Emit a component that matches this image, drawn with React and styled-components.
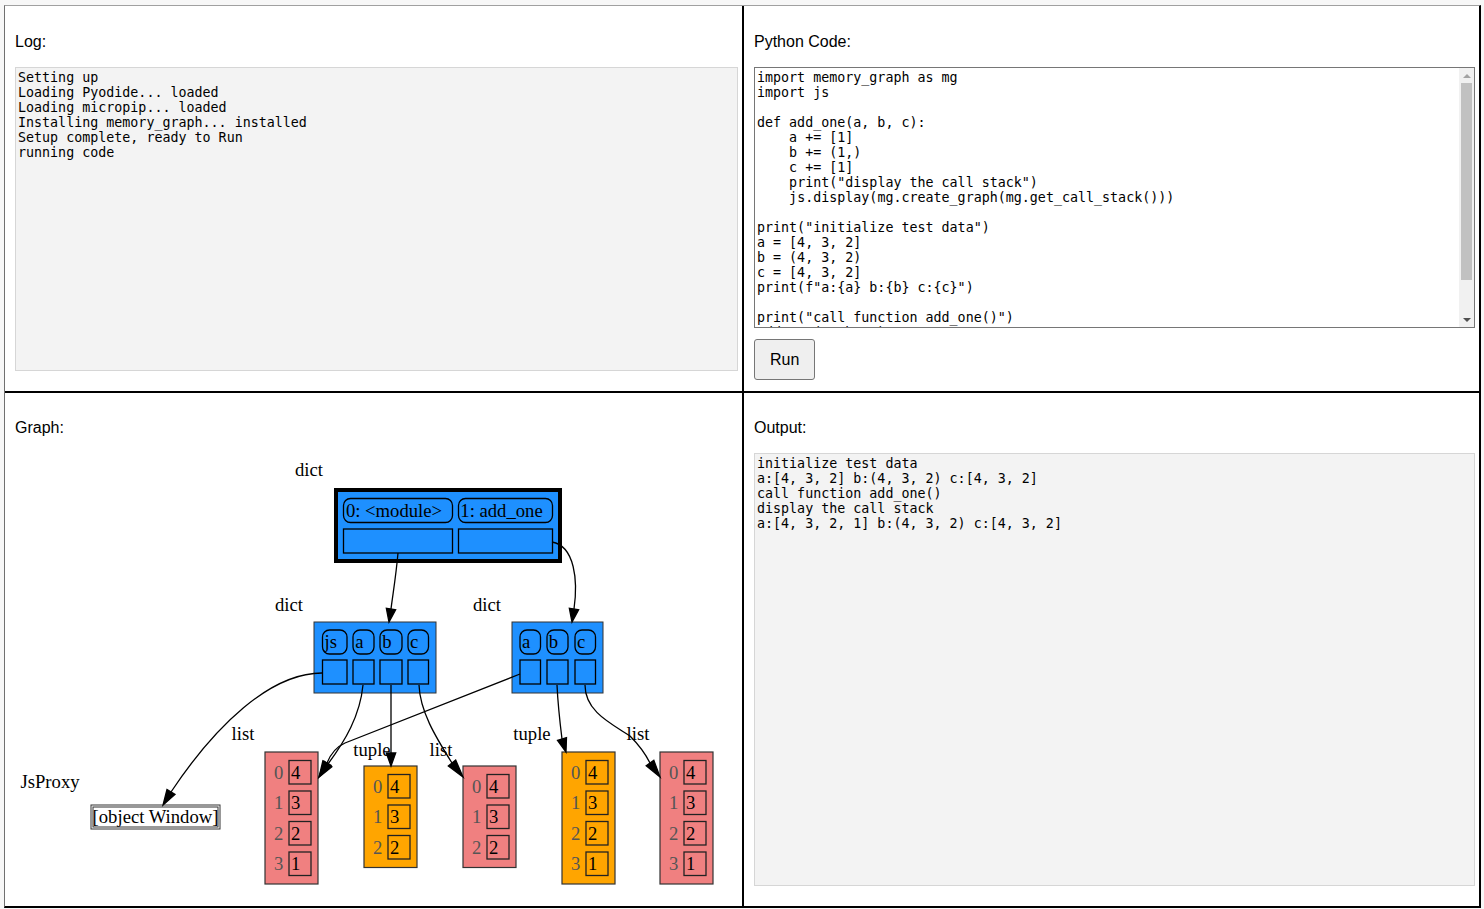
import styled, { createGlobalStyle } from "styled-components";

const GlobalStyle = createGlobalStyle`
  html, body {
    margin: 0;
    padding: 0;
    background: #f7f7f7;
  }
  body {
    font-family: "Liberation Sans", Arial, sans-serif;
  }
`;

const Board = styled.div`
  display: grid;
  grid-template-columns: 737px 1fr;
  grid-template-rows: 385px 1fr;
  gap: 2px;
  background: #000;
  margin: 5px 0 0 4px;
  width: 1474px;
  height: 900px;
  border-top: 1px solid #a0a0a0;
  border-left: 1px solid #707070;
  border-right: 2px solid #000;
  border-bottom: 2px solid #000;
`;

const Cell = styled.section`
  background: #fff;
  display: flex;
  flex-direction: column;
  align-items: flex-start;
  padding: ${(p) => (p.$low ? "9px" : "10px")} 4px 20px 10px;
  min-width: 0;
  min-height: 0;
  overflow: hidden;
`;

const Label = styled.p`
  margin: 16px 0;
  font-size: 16px;
  line-height: 19px;
  color: #000;
  flex-shrink: 0;
`;

const Console = styled.div`
  align-self: stretch;
  flex: 1;
  background: #f3f3f3;
  border: 1px solid #d6d6d6;
  padding: 2px;
  font-family: "DejaVu Sans Mono", monospace;
  font-size: 13.333px;
  line-height: 15px;
  white-space: pre;
  color: #000;
  overflow: hidden;
`;

const CodeBox = styled.div`
  align-self: stretch;
  flex-shrink: 0;
  display: flex;
  height: 261px;
  box-sizing: border-box;
  border: 1px solid #767676;
  background: #fff;
`;

const Code = styled.textarea`
  flex: 1;
  display: block;
  margin: 0;
  padding: 2px;
  border: 0;
  background: transparent;
  font-family: "DejaVu Sans Mono", monospace;
  font-size: 13.333px;
  line-height: 15px;
  color: #000;
  resize: none;
  overflow: hidden;
  outline: none;
`;

const ScrollBar = styled.div`
  width: 15px;
  display: flex;
  flex-direction: column;
  background: #f1f1f1;
`;

const ScrollButton = styled.div`
  height: 15px;
  display: flex;
  align-items: center;
  justify-content: center;
  &::before {
    content: "";
    width: 0;
    height: 0;
    border-left: 4px solid transparent;
    border-right: 4px solid transparent;
    ${(p) =>
      p.$down
        ? "border-top: 4px solid #505050;"
        : "border-bottom: 4px solid #a3a3a3;"}
  }
`;

const Track = styled.div`
  flex: 1;
  padding: 0 2px;
`;

const Thumb = styled.div`
  background: #c1c1c1;
`;

const RunButton = styled.button`
  flex-shrink: 0;
  margin-top: 11px;
  padding: 10px 15px;
  font-family: "Liberation Sans", Arial, sans-serif;
  font-size: 16px;
  line-height: 19px;
  background: #efefef;
  border: 1px solid #767676;
  border-radius: 3px;
  color: #000;
`;

const Graph = styled.svg`
  display: block;
  flex-shrink: 0;
  font-family: "Liberation Serif", "Times New Roman", serif;
  font-size: 18.67px;
`;

const logText = `Setting up
Loading Pyodide... loaded
Loading micropip... loaded
Installing memory_graph... installed
Setup complete, ready to Run
running code`;

const codeText = `import memory_graph as mg
import js

def add_one(a, b, c):
    a += [1]
    b += (1,)
    c += [1]
    print("display the call stack")
    js.display(mg.create_graph(mg.get_call_stack()))

print("initialize test data")
a = [4, 3, 2]
b = (4, 3, 2)
c = [4, 3, 2]
print(f"a:{a} b:{b} c:{c}")

print("call function add_one()")
add_one(a, b, c)
print(f"a:{a} b:{b} c:{c}")
`;

const outputText = `initialize test data
a:[4, 3, 2] b:(4, 3, 2) c:[4, 3, 2]
call function add_one()
display the call stack
a:[4, 3, 2, 1] b:(4, 3, 2) c:[4, 3, 2]`;

function Arrow({ d, base, tip }) {
  const dx = tip[0] - base[0];
  const dy = tip[1] - base[1];
  const len = Math.hypot(dx, dy) || 1;
  const px = (-dy / len) * 4.7;
  const py = (dx / len) * 4.7;
  const pts = `${base[0] + px},${base[1] + py} ${tip[0]},${tip[1]} ${base[0] - px},${base[1] - py}`;
  return (
    <g>
      <path d={d} fill="none" stroke="#000" strokeWidth="1.3" />
      <polygon points={pts} fill="#000" stroke="#000" strokeWidth="1.3" />
    </g>
  );
}

function Key({ x, y, w, text }) {
  return (
    <g>
      <rect x={x} y={y} width={w} height={24} rx={7} fill="none" stroke="#000" strokeWidth="1.3" />
      <text x={x + w / 2 - 4} y={y + 18} textAnchor="middle">
        {text}
      </text>
    </g>
  );
}

function Slot({ x, y, w }) {
  return <rect x={x} y={y} width={w} height={24} fill="none" stroke="#000" strokeWidth="1.3" />;
}

function Dict({ x, y, w, keys }) {
  return (
    <g>
      <rect x={x} y={y} width={w} height={71} fill="#1e90ff" stroke="#333" strokeWidth="1" />
      {keys.map((k) => (
        <g key={k.text}>
          <Key x={k.x} y={y + 8} w={k.w} text={k.text} />
          <Slot x={k.x} y={y + 38} w={k.w} />
        </g>
      ))}
    </g>
  );
}

function Seq({ x, y, items, fill }) {
  const h = 17 + items.length * 30.5 - 7;
  return (
    <g>
      <rect x={x} y={y} width={53} height={h} fill={fill} stroke="#333" strokeWidth="1.2" />
      {items.map((v, i) => {
        const ry = y + 8.5 + i * 30.5;
        return (
          <g key={i}>
            <text x={x + 9} y={ry + 18} fill="#555">
              {i}
            </text>
            <rect x={x + 24} y={ry} width={22} height={23.5} fill="none" stroke="#222" strokeWidth="1.3" />
            <text x={x + 26} y={ry + 18} fill="#000">
              {v}
            </text>
          </g>
        );
      })}
    </g>
  );
}

function MemoryGraph() {
  return (
    <Graph width="723" height="434" viewBox="15 452 723 434">
      <text x="309" y="475" textAnchor="middle">dict</text>
      <rect x="334" y="487" width="228" height="75" fill="#1e90ff" />
      <rect x="336" y="489" width="224" height="71" fill="none" stroke="#000" strokeWidth="4" />
      <Key x={343.5} y={497.5} w={109} text="0: <module>" />
      <Key x={458.5} y={497.5} w={94} text="1: add_one" />
      <Slot x={343.5} y={528} w={109} />
      <Slot x={458.5} y={528} w={94} />

      <text x="289" y="610" textAnchor="middle">dict</text>
      <Dict
        x={314}
        y={621}
        w={122}
        keys={[
          { x: 322.5, w: 24.5, text: "js" },
          { x: 353, w: 21, text: "a" },
          { x: 380, w: 22, text: "b" },
          { x: 408, w: 20.5, text: "c" },
        ]}
      />
      <text x="487" y="610" textAnchor="middle">dict</text>
      <Dict
        x={512}
        y={621}
        w={91}
        keys={[
          { x: 520, w: 20.5, text: "a" },
          { x: 547, w: 21, text: "b" },
          { x: 575, w: 20.5, text: "c" },
        ]}
      />

      <text x="50" y="787" textAnchor="middle">JsProxy</text>
      <rect x="91" y="804" width="129" height="24" fill="#fff" stroke="#333" strokeWidth="1" />
      <rect x="93" y="806" width="125" height="20" fill="none" stroke="#333" strokeWidth="1" />
      <text x="155.5" y="822" textAnchor="middle">[object Window]</text>

      <text x="243" y="739" textAnchor="middle">list</text>
      <Seq x={265} y={751} items={[4, 3, 2, 1]} fill="#f08080" />
      <text x="372" y="755" textAnchor="middle">tuple</text>
      <Seq x={364} y={765} items={[4, 3, 2]} fill="#ffa500" />
      <text x="441" y="755" textAnchor="middle">list</text>
      <Seq x={463} y={765} items={[4, 3, 2]} fill="#f08080" />
      <text x="532" y="739" textAnchor="middle">tuple</text>
      <Seq x={562} y={751} items={[4, 3, 2, 1]} fill="#ffa500" />
      <text x="638" y="739" textAnchor="middle">list</text>
      <Seq x={660} y={751} items={[4, 3, 2, 1]} fill="#f08080" />

      <Arrow d="M398,552 C396,575 393,592 391,608" base={[391, 608]} tip={[389, 621]} />
      <Arrow d="M552,541 C575,545 578,580 574,608" base={[574, 608]} tip={[572, 621]} />
      <Arrow d="M322,672 C270,672 215,725 171,791" base={[171, 791]} tip={[163, 804]} />
      <Arrow d="M363,684 C360,715 345,740 328,763" base={[328, 763]} tip={[319, 776]} />
      <Arrow d="M520,673 L345,742 C336,746 331,752 327,762" base={[327, 762]} tip={[319, 776]} />
      <Arrow d="M391,684 L391,752" base={[391, 752]} tip={[391, 765]} />
      <Arrow d="M419,684 C420,710 435,735 452,762" base={[452, 762]} tip={[463, 776]} />
      <Arrow d="M557,684 C558,705 560,722 562,738" base={[562, 738]} tip={[566, 751]} />
      <Arrow d="M585,684 C585,710 610,722 630,735 C640,745 645,752 650,762" base={[650, 762]} tip={[660, 776]} />
    </Graph>
  );
}

export default function App() {
  return (
    <>
      <GlobalStyle />
      <Board>
        <Cell>
          <Label>Log:</Label>
          <Console>{logText}</Console>
        </Cell>
        <Cell>
          <Label>Python Code:</Label>
          <CodeBox>
            <Code defaultValue={codeText} readOnly spellCheck={false} />
            <ScrollBar>
              <ScrollButton />
              <Track>
                <Thumb style={{ height: "197px" }} />
              </Track>
              <ScrollButton $down />
            </ScrollBar>
          </CodeBox>
          <RunButton>Run</RunButton>
        </Cell>
        <Cell $low>
          <Label>Graph:</Label>
          <MemoryGraph />
        </Cell>
        <Cell $low>
          <Label>Output:</Label>
          <Console>{outputText}</Console>
        </Cell>
      </Board>
    </>
  );
}
